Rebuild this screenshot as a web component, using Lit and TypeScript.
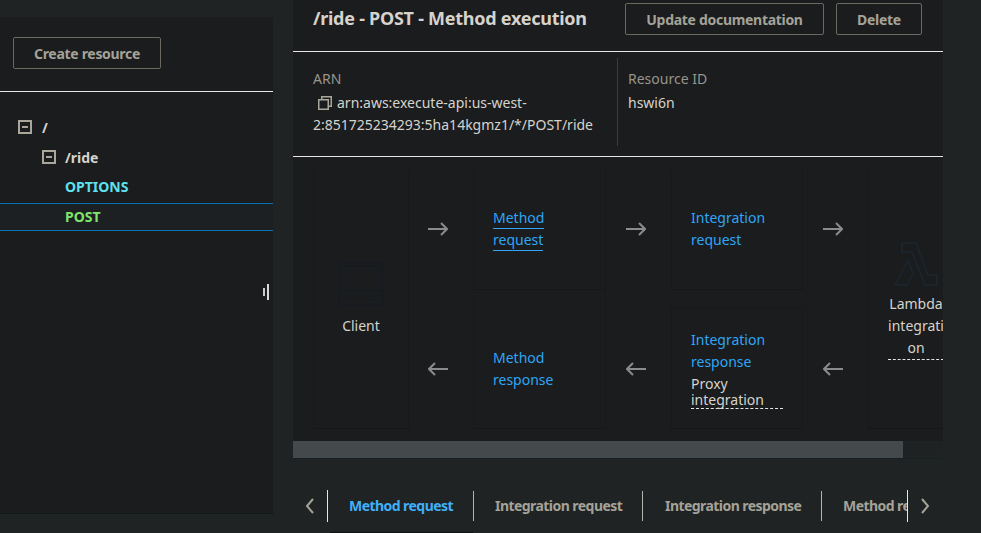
import { LitElement, html, css, svg } from 'lit'
import { customElement } from 'lit/decorators.js'

const arrow = (dir: 'right' | 'left') => html`
  <svg class="arrow" width="20" height="14" viewBox="0 0 20 14">
    ${dir === 'right'
      ? svg`<path d="M0 7H19M13 1L19 7L13 13" />`
      : svg`<path d="M20 7H1M7 1L1 7L7 13" />`}
  </svg>
`

const minusBox = html`
  <svg class="toggle" width="14" height="14" viewBox="0 0 14 14">
    <rect x="1" y="1" width="12" height="12" />
    <path d="M4 7H10" />
  </svg>
`

@customElement('app-root')
export class AppRoot extends LitElement {
  static styles = css`
    :host {
      display: grid;
      grid-template-columns: 273px 20px 650px 38px;
      height: 533px;
      overflow: hidden;
      position: relative;
      background: #1f2324;
      font-family: "Noto Sans", sans-serif;
      font-size: 14px;
      color: #d6d3cc;
    }
    button {
      font: inherit;
      font-weight: 700;
      letter-spacing: -0.3px;
      height: 32px;
      padding: 0;
      background: transparent;
      color: #a5a298;
      border: 1px solid #6c675f;
      border-radius: 2px;
    }
    .side {
      grid-column: 1;
      margin-top: 17px;
      height: 497px;
      box-sizing: border-box;
      background: #1a1c1e;
      border-bottom: 1px solid #101a1c;
    }
    .side-top {
      height: 75px;
      box-sizing: border-box;
      padding: 20px 0 0 13px;
      border-bottom: 1px solid #e6e6e6;
    }
    .side-top button {
      width: 148px;
    }
    .tree {
      padding-top: 20px;
    }
    .row {
      display: flex;
      align-items: center;
      height: 30px;
      box-sizing: border-box;
      font-weight: 700;
    }
    .row.level-0 {
      padding-left: 18px;
      gap: 10px;
    }
    .row.level-1 {
      padding-left: 42px;
      gap: 9px;
    }
    .row.method {
      padding-left: 65px;
      padding-bottom: 1px;
    }
    .row.options {
      color: #5ee1ee;
    }
    .row.post {
      height: 28px;
      margin-top: 1px;
      color: #7ee46a;
      background: #1d2022;
      border-top: 1px solid #0b6fb8;
      border-bottom: 1px solid #0b6fb8;
    }
    .toggle rect {
      fill: none;
      stroke: #aaa69c;
      stroke-width: 2;
    }
    .toggle path {
      fill: none;
      stroke: #aaa69c;
      stroke-width: 2;
    }
    .handle {
      position: absolute;
      left: 263px;
      top: 284px;
    }
    .main {
      grid-column: 3;
    }
    .panel {
      height: 459px;
      box-sizing: border-box;
      background: #1a1c1e;
      border-bottom: 1px solid #172022;
    }
    .head {
      display: flex;
      align-items: flex-start;
      height: 52px;
      box-sizing: border-box;
      padding: 3px 21px 0 20px;
      border-bottom: 1px solid #e6e6e6;
    }
    .head h1 {
      flex: 1;
      margin: 0;
      font-size: 18px;
      line-height: 30px;
      font-weight: 700;
      letter-spacing: -0.26px;
      color: #d6d3cc;
    }
    .head button.update {
      width: 199px;
      margin-right: 12px;
    }
    .head button.delete {
      width: 86px;
    }
    .meta {
      display: grid;
      grid-template-columns: 324px 1fr;
      height: 105px;
      box-sizing: border-box;
      padding-top: 6px;
      border-bottom: 1px solid #e6e6e6;
    }
    .meta > div {
      height: 88px;
      box-sizing: border-box;
      padding: 10px 0 0 20px;
      line-height: 22px;
    }
    .meta > div + div {
      padding-left: 10px;
      border-left: 1px solid #3a3d3f;
    }
    .label {
      color: #98958b;
      margin-bottom: 2px;
    }
    .copy {
      margin: 0 5px 0 5px;
      vertical-align: -2px;
    }
    .copy path,
    .copy rect {
      fill: none;
      stroke: #aaa69c;
      stroke-width: 1.5;
    }
    .flow-wrap {
      height: 284px;
      overflow: hidden;
    }
    .flow {
      display: grid;
      width: 671px;
      margin: 11px 0 0 20px;
      grid-template-columns: 96px 64px 133px 65px 132px 65px 96px;
      grid-template-rows: 122px 139px;
    }
    .card {
      display: flex;
      flex-direction: column;
      justify-content: center;
      box-sizing: border-box;
      padding: 0 19px;
      line-height: 22px;
      border: 1px solid #17191b;
      border-top-color: transparent;
      border-bottom-color: #131819;
    }
    .card.tall {
      grid-row: 1 / span 2;
      align-items: center;
      text-align: center;
    }
    .card.client {
      grid-column: 1;
      padding-top: 2px;
    }
    .card.lambda {
      grid-column: 7;
      padding: 4px 0 0;
      white-space: nowrap;
    }
    .card.low {
      padding-top: 19px;
    }
    .card.inset {
      margin-top: 17px;
      padding-top: 1px;
      border-top-color: #17191b;
    }
    .link {
      color: #2ea6f5;
    }
    .link.under span {
      border-bottom: 1px solid #2ea6f5;
      line-height: 20px;
      align-self: flex-start;
    }
    .link.under {
      display: flex;
      flex-direction: column;
      align-items: flex-start;
      gap: 1px;
    }
    .note {
      margin-top: 3px;
      line-height: 16px;
      border-bottom: 1px dashed #e6e6e6;
      width: 92px;
    }
    .dashed {
      display: block;
      width: 56px;
      border-bottom: 1px dashed #e6e6e6;
    }
    .cell {
      display: flex;
      align-items: center;
      justify-content: center;
      padding-right: 6px;
    }
    .cell.low {
      padding-top: 19px;
    }
    .arrow path {
      fill: none;
      stroke: #8b8b8b;
      stroke-width: 2;
    }
    .icon-client {
      margin-bottom: 9px;
    }
    .icon-client rect,
    .icon-client path {
      fill: none;
      stroke: #171a21;
      stroke-width: 1.5;
    }
    .icon-lambda {
      margin-bottom: 7px;
    }
    .icon-lambda path {
      fill: none;
      stroke: #1c2630;
      stroke-width: 1.5;
    }
    .scroll {
      height: 17px;
      background: #1e2223;
    }
    .thumb {
      width: 610px;
      height: 17px;
      background: #44494b;
    }
    .tabs {
      display: flex;
      align-items: center;
      height: 32px;
      margin-top: 31px;
    }
    .chev {
      flex: none;
      display: flex;
      justify-content: center;
    }
    .chev.prev {
      width: 34px;
    }
    .chev.next {
      width: 34px;
      border-left: 1px solid #e6e6e6;
      height: 32px;
      align-items: center;
      box-sizing: border-box;
    }
    .chev path {
      fill: none;
      stroke: #a5a298;
      stroke-width: 2;
    }
    .tab-list {
      display: flex;
      align-items: center;
      width: 580px;
      height: 32px;
      flex: none;
      overflow: hidden;
      border-left: 1px solid #e6e6e6;
      box-sizing: border-box;
    }
    .tab {
      flex: none;
      box-sizing: border-box;
      height: 30px;
      line-height: 30px;
      padding-left: 21px;
      font-weight: 700;
      letter-spacing: -0.55px;
      color: #a5a298;
      border-right: 1px solid #b5b3ad;
      white-space: nowrap;
    }
    .tab.active {
      color: #3fb0f7;
    }
    .tab.wide {
      padding-left: 22px;
    }
    .tab.last {
      border-right: 0;
    }
    .tab-mark {
      position: absolute;
      left: 330px;
      top: 532px;
      width: 143px;
      height: 1px;
      background: #0e1112;
    }
  `

  render () {
    return html`
      <aside class="side">
        <div class="side-top"><button>Create resource</button></div>
        <div class="tree">
          <div class="row level-0">${minusBox}<span>/</span></div>
          <div class="row level-1">${minusBox}<span>/ride</span></div>
          <div class="row method options">OPTIONS</div>
          <div class="row method post">POST</div>
        </div>
      </aside>
      <svg class="handle" width="6" height="16" viewBox="0 0 6 16">
        <rect x="0" y="4" width="2" height="8" fill="#c9c9c9" />
        <rect x="4" y="0" width="2" height="16" fill="#d9d9d9" />
      </svg>
      <main class="main">
        <section class="panel">
          <header class="head">
            <h1>/ride - POST - Method execution</h1>
            <button class="update">Update documentation</button>
            <button class="delete">Delete</button>
          </header>
          <div class="meta">
            <div>
              <div class="label">ARN</div>
              <svg class="copy" width="14" height="14" viewBox="0 0 14 14">
                <rect x="0.75" y="3.75" width="9.5" height="9.5" />
                <path d="M3.75 3.5V0.75H13.25V10.25H10.5" />
              </svg>arn:aws:execute-api:us-west-<br />2:851725234293:5ha14kgmz1/*/POST/ride
            </div>
            <div>
              <div class="label">Resource ID</div>
              hswi6n
            </div>
          </div>
          <div class="flow-wrap">
            <div class="flow">
              <div class="card tall client">
                <svg class="icon-client" width="46" height="44" viewBox="0 0 46 44">
                  <rect x="1" y="1" width="44" height="42" />
                  <rect x="4" y="4" width="38" height="25" />
                  <path d="M1 34H45M32 38H42" />
                </svg>
                Client
              </div>
              <div class="cell">${arrow('right')}</div>
              <div class="card">
                <div class="link under"><span>Method</span><span>request</span></div>
              </div>
              <div class="cell">${arrow('right')}</div>
              <div class="card"><div class="link">Integration<br />request</div></div>
              <div class="cell">${arrow('right')}</div>
              <div class="card tall lambda">
                <svg class="icon-lambda" width="44" height="44" viewBox="0 0 44 44">
                  <path d="M8 1H22L34 33H43V43H31L18 10H8Z" />
                  <path d="M14 18L19 31L13 43H1Z" />
                </svg>
                Lambda<br />integrati<br />on
                <span class="dashed"></span>
              </div>
              <div class="cell low">${arrow('left')}</div>
              <div class="card low">
                <div class="link">Method<br />response</div>
              </div>
              <div class="cell low">${arrow('left')}</div>
              <div class="card low inset">
                <div class="link">Integration<br />response</div>
                <div class="note">Proxy<br />integration</div>
              </div>
              <div class="cell low">${arrow('left')}</div>
            </div>
          </div>
          <div class="scroll"><div class="thumb"></div></div>
        </section>
        <nav class="tabs">
          <div class="chev prev">
            <svg width="10" height="16" viewBox="0 0 10 16"><path d="M8 1L2 8L8 15" /></svg>
          </div>
          <div class="tab-list">
            <div class="tab active" style="width: 146px">Method request</div>
            <div class="tab" style="width: 169px">Integration request</div>
            <div class="tab wide" style="width: 179px">Integration response</div>
            <div class="tab last">Method response</div>
          </div>
          <div class="chev next">
            <svg width="10" height="16" viewBox="0 0 10 16"><path d="M2 1L8 8L2 15" /></svg>
          </div>
        </nav>
      </main>
      <div class="tab-mark"></div>
    `
  }
}
